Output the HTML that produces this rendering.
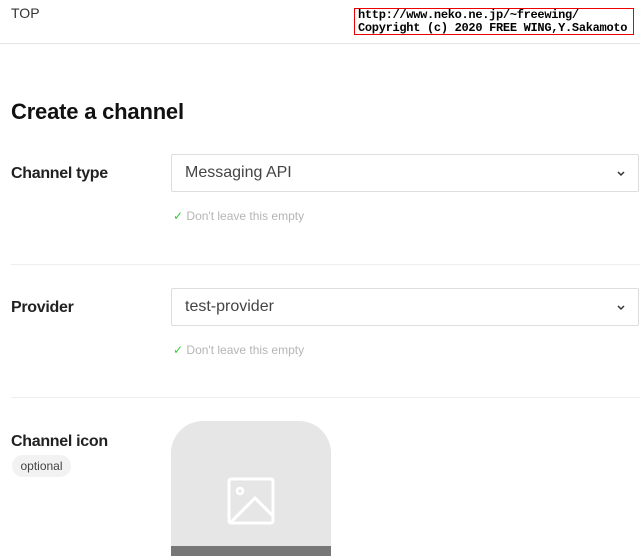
<!DOCTYPE html>
<html style="height:556px;overflow:hidden"><head><style>
body{margin:0;width:640px;height:556px;overflow:hidden;background:#fff;font-family:"Liberation Sans",sans-serif;color:#111;position:relative}
.a{position:absolute}
.lbl{font-weight:bold;font-size:16px;color:#222;letter-spacing:-0.3px}
.sel{position:absolute;left:171px;width:468px;height:38px;border:1px solid #ddd;border-radius:2px;font-size:16px;color:#444;box-sizing:border-box;padding-left:13px;line-height:36px}
.sel svg{position:absolute;right:12px;top:15px}
.help{font-size:12px;color:#b5b5b5;left:173px}
.hr{left:11px;right:0;height:1px;background:#eee}
</style></head><body>
<div class="a" style="left:11px;top:5px;font-size:14px;color:#333">TOP</div>
<div class="a" style="left:354px;top:8px;height:27px;border:1px solid #e00;font-family:'Liberation Mono',monospace;font-size:12px;letter-spacing:-0.3px;line-height:13px;padding-left:3px;box-sizing:border-box;width:280px;font-weight:bold;color:#000;white-space:nowrap;overflow:hidden">http://www.neko.ne.jp/~freewing/<br>Copyright (c) 2020 FREE WING,Y.Sakamoto</div>
<div class="a" style="left:0;right:0;top:43px;height:1px;background:#e6e6e6"></div>
<div class="a" style="left:11px;top:99px;font-size:22px;font-weight:bold;letter-spacing:-0.2px">Create a channel</div>
<div class="a lbl" style="left:11px;top:165px">Channel type</div>
<div class="sel" style="top:154px">Messaging API<svg width="10" height="7" viewBox="0 0 10 7"><path d="M2 2l3 3 3-3" stroke="#333" stroke-width="1.5" fill="none"/></svg></div>
<div class="a help" style="top:209px"><span style="color:#3c3">✓</span> Don't leave this empty</div>
<div class="a hr" style="top:264px"></div>
<div class="a lbl" style="left:11px;top:299px">Provider</div>
<div class="sel" style="top:288px">test-provider<svg width="10" height="7" viewBox="0 0 10 7"><path d="M2 2l3 3 3-3" stroke="#333" stroke-width="1.5" fill="none"/></svg></div>
<div class="a help" style="top:343px"><span style="color:#3c3">✓</span> Don't leave this empty</div>
<div class="a hr" style="top:397px"></div>
<div class="a lbl" style="left:11px;top:433px">Channel icon</div>
<div class="a" style="left:12px;top:455px;width:59px;height:22px;border-radius:11px;background:#f2f2f2;font-size:12px;color:#444;text-align:center;line-height:22px">optional</div>
<div class="a" style="left:171px;top:421px;width:160px;height:135px;border-radius:32px 32px 0 0;background:#e6e6e6;overflow:hidden">
<div class="a" style="left:0;right:0;top:125px;height:20px;background:#777"></div>
<svg class="a" style="left:56px;top:56px" width="48" height="48" viewBox="0 0 48 48"><rect x="2" y="2" width="44" height="44" rx="2" fill="none" stroke="#fff" stroke-width="3"/><circle cx="13" cy="14" r="3" fill="none" stroke="#fff" stroke-width="2.5"/><path d="M4 45L28 21 46 39" fill="none" stroke="#fff" stroke-width="3"/></svg>
</div>
</body></html>
